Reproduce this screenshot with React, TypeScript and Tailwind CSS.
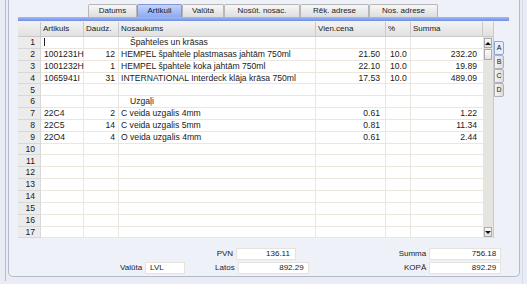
import React from 'react';

const font = { fontFamily: '"Liberation Sans", Arial, sans-serif' };

const tabs = ['Datums', 'Artikuli', 'Valūta', 'Nosūt. nosac.', 'Rēķ. adrese', 'Nos. adrese'];
const tabWidths = ['w-[49px]', 'w-[45px]', 'w-[42px]', 'w-[76px]', 'w-[69px]', 'w-[69px]'];

type Row = {
  art?: string;
  qty?: string;
  name?: string;
  price?: string;
  pct?: string;
  sum?: string;
  section?: boolean;
  cursor?: boolean;
};

const rows: Row[] = [
  { name: 'Špahteles un krāsas', section: true, cursor: true },
  { art: '1001231H', qty: '12', name: 'HEMPEL špahtele plastmasas jahtām 750ml', price: '21.50', pct: '10.0', sum: '232.20' },
  { art: '1001232H', qty: '1', name: 'HEMPEL špahtele koka jahtām 750ml', price: '22.10', pct: '10.0', sum: '19.89' },
  { art: '1065941I', qty: '31', name: 'INTERNATIONAL Interdeck klāja krāsa 750ml', price: '17.53', pct: '10.0', sum: '489.09' },
  {},
  { name: 'Uzgaļi', section: true },
  { art: '22C4', qty: '2', name: 'C veida uzgalis 4mm', price: '0.61', sum: '1.22' },
  { art: '22C5', qty: '14', name: 'C veida uzgalis 5mm', price: '0.81', sum: '11.34' },
  { art: '22O4', qty: '4', name: 'O veida uzgalis 4mm', price: '0.61', sum: '2.44' },
  {}, {}, {}, {}, {}, {}, {}, {},
];

const cols = 'grid grid-cols-[23px_43px_35px_197px_70px_25px_72px]';

function SideTab({ label, active }: { label: string; active?: boolean }) {
  return (
    <div
      className={`w-[10px] h-[14px] flex items-center justify-center text-[7px] border rounded-r-[2px] ${
        active
          ? 'bg-[#e6edfb] border-[#8fa6d6] text-[#111]'
          : 'bg-gradient-to-r from-[#f4f4f4] to-[#dcdcdc] border-[#aeb1b8] text-[#222]'
      }`}
    >
      {label}
    </div>
  );
}

function Field({ label, value, w, left }: { label: string; value: string; w: string; left?: boolean }) {
  return (
    <div className="flex items-center gap-[3px]">
      <span className="text-[8px] text-[#222]">{label}</span>
      <div
        className={`${w} h-[12px] bg-white border border-[#e6e3dc] text-[8px] flex items-center px-[4px] ${
          left ? 'justify-start' : 'justify-end'
        }`}
      >
        {value}
      </div>
    </div>
  );
}

export default function App() {
  return (
    <div className="w-[527px] h-[284px] bg-[#e9ecf5] relative overflow-hidden text-[#1a1a1a]" style={font}>
      <div className="absolute left-[5px] top-0 bottom-[3px] w-[1px] bg-[#b9bdc9]" />
      <div className="absolute left-[8px] top-0 w-[512px] h-[277px] bg-[#eff1f9] border-x border-b border-[#b4bac9] rounded-b-[5px]">
        {/* tabs */}
        <div className="flex pl-[79px] pt-[4px] h-[17px]">
          {tabs.map((t, i) => (
            <div
              key={t}
              className={`${tabWidths[i]} h-[13px] flex items-center justify-center text-[8px] border border-b-0 rounded-t-[2px] ${
                i === 1
                  ? 'bg-gradient-to-b from-[#c4d4fa] to-[#8ea9ef] border-[#7f97d8] text-[#0c1a40]'
                  : 'bg-gradient-to-b from-[#f7f7f7] to-[#dedede] border-[#b7b7b7] text-[#222]'
              }`}
            >
              {t}
            </div>
          ))}
        </div>
        <div className="ml-[9px] w-[491px] h-[4px] bg-gradient-to-b from-[#a3baf3] to-[#6f8fe5]" />

        {/* grid */}
        <div className="flex ml-[9px] mt-[1px]">
          <div className="w-[465px]">
            <div className={`${cols} h-[15px] bg-gradient-to-b from-[#f2f2f2] to-[#e0e0e0] text-[8px]`}>
              {['', 'Artikuls', 'Daudz.', 'Nosaukums', 'Vien.cena', '%', 'Summa'].map((h, i) => (
                <div key={i} className="border-r border-b border-[#c9c9c9] px-[2px] flex items-center">
                  {h}
                </div>
              ))}
            </div>
            {rows.map((r, i) => (
              <div key={i} className={`${cols} h-[11.85px] text-[8.6px] leading-none`}>
                <div className="bg-[#ececec] border-r border-b border-[#d8d8d8] flex items-center justify-end pr-[5px]">
                  {i + 1}
                </div>
                <div className="bg-white border-r border-b border-[#ebe7df] flex items-center px-[3px]">
                  {r.cursor ? <span className="w-[1px] h-[8px] bg-[#222]" /> : r.art}
                </div>
                <div className="bg-white border-r border-b border-[#ebe7df] flex items-center justify-end px-[3px]">
                  {r.qty}
                </div>
                <div
                  className={`bg-white border-r border-b border-[#ebe7df] flex items-center whitespace-nowrap overflow-hidden ${
                    r.section ? 'pl-[11px]' : 'pl-[2px]'
                  }`}
                >
                  {r.name}
                </div>
                <div className="bg-white border-r border-b border-[#ebe7df] flex items-center justify-end pr-[5px]">
                  {r.price}
                </div>
                <div className="bg-white border-r border-b border-[#ebe7df] flex items-center pl-[4px]">{r.pct}</div>
                <div className="bg-white border-b border-[#ebe7df] flex items-center justify-end pr-[6px]">
                  {r.sum}
                </div>
              </div>
            ))}
          </div>
          {/* scrollbar */}
          <div className="w-[11px] flex flex-col">
            <div className="h-[15px] bg-gradient-to-b from-[#f2f2f2] to-[#e0e0e0] border-b border-r border-[#c9c9c9]" />
            <div className="flex-1 bg-[#e6e4de] border-r border-[#c9c9c9] flex flex-col p-[1px]">
              <div className="h-[10px] bg-gradient-to-b from-[#fbfbfb] to-[#e0e0e0] border border-[#a9a9a9] flex items-center justify-center">
                <span className="w-0 h-0 border-x-[3px] border-x-transparent border-b-[3px] border-b-[#111]" />
              </div>
              <div className="h-[11px] mt-[1px] bg-gradient-to-b from-[#fbfbfb] to-[#e4e4e4] border border-[#a9a9a9]" />
              <div className="flex-1" />
              <div className="h-[10px] bg-gradient-to-b from-[#fbfbfb] to-[#e0e0e0] border border-[#a9a9a9] flex items-center justify-center">
                <span className="w-0 h-0 border-x-[3px] border-x-transparent border-t-[3px] border-t-[#111]" />
              </div>
            </div>
          </div>
          {/* side tabs */}
          <div className="flex flex-col pt-[19px] gap-0">
            <SideTab label="A" active />
            <SideTab label="B" />
            <SideTab label="C" />
            <SideTab label="D" />
          </div>
        </div>

        {/* footer */}
        <div className="flex mt-[10px] ml-[111px]">
          <div className="flex flex-col items-end gap-[2px] pt-[14px]">
            <Field label="Valūta" value="LVL" w="w-[40px]" left />
          </div>
          <div className="flex flex-col items-end gap-[2px] ml-[30px]">
            <div className="flex items-center gap-[3px] w-[92px] justify-end">
              <span className="text-[8px]">PVN</span>
              <div className="w-[61px] h-[12px] bg-white border border-[#e6e3dc] text-[8px] flex items-center justify-end px-[5px]">
                136.11
              </div>
              <div className="w-[10px]" />
            </div>
            <Field label="Latos" value="892.29" w="w-[71px]" />
          </div>
          <div className="flex flex-col items-end gap-[2px] ml-[90px]">
            <Field label="Summa" value="756.18" w="w-[72px]" />
            <Field label="KOPĀ" value="892.29" w="w-[72px]" />
          </div>
        </div>
      </div>
      <div className="absolute left-[522px] top-0 bottom-0 w-[1px] bg-[#d6dae6]" />
    </div>
  );
}
